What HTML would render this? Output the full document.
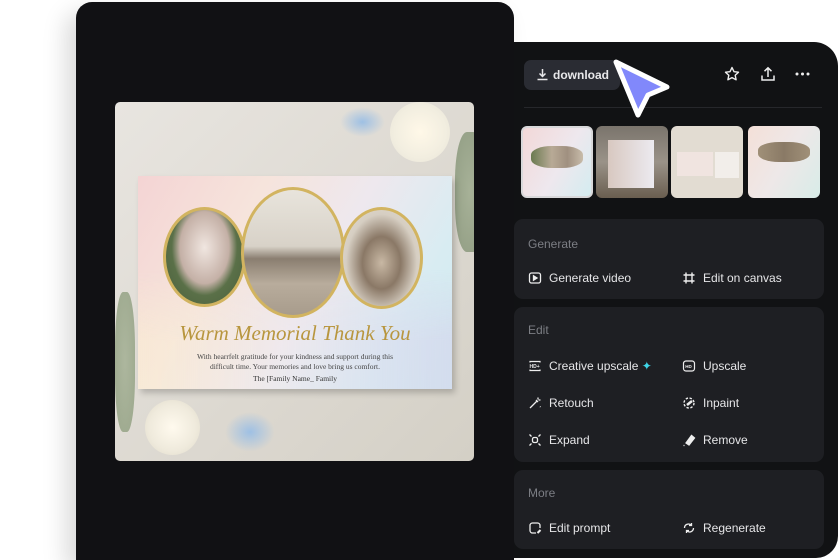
<!DOCTYPE html>
<html style="width:840px;height:560px;overflow:hidden"><head><meta charset="utf-8"><style>
*{margin:0;padding:0;box-sizing:border-box}
body{width:840px;height:560px;background:#fff;position:relative;overflow:hidden;font-family:"Liberation Sans",sans-serif}
.left{position:absolute;left:76px;top:2px;width:438px;height:558px;background:#111114;border-radius:16px 16px 0 0;box-shadow:-10px 10px 24px rgba(0,0,0,.15)}
.img{position:absolute;left:115px;top:102px;width:359px;height:359px;border-radius:5px;overflow:hidden;background:linear-gradient(135deg,#e8e5e0,#dcd8d0 60%,#d4d0c6)}
.card{position:absolute;left:23px;top:74px;width:314px;height:213px;background:linear-gradient(120deg,#f4d4d4 0%,#f6e4dc 30%,#eee8ee 55%,#d8ecf2 80%,#cfeef0 100%);box-shadow:3px 4px 6px rgba(0,0,0,.2);overflow:hidden}
.card:after{content:"";position:absolute;left:0;right:0;bottom:0;height:120px;background:linear-gradient(90deg,rgba(250,240,210,.5),rgba(240,235,240,.2),rgba(215,200,235,.45));-webkit-mask:linear-gradient(transparent,#000 60%)}
.ov{position:absolute;border-radius:50%;border:3px solid #d2b460;z-index:2}
.t{position:absolute;z-index:3;width:100%;text-align:center;left:0}
.right{position:absolute;left:514px;top:42px;width:324px;height:516px;background:#111214;border-radius:0 24px 22px 0}
.dl{position:absolute;left:10px;top:18px;width:96px;height:30px;background:#2a2c33;border-radius:7px;color:#e8e8ea;font-weight:bold;font-size:12px;line-height:30px;padding-left:29px}
.sep{position:absolute;left:10px;right:16px;top:65px;height:1px;background:#26272b}
.th{position:absolute;top:84px;width:72px;height:72px;border-radius:6px;overflow:hidden}
.box{position:absolute;left:0px;width:310px;background:#1e1f23;border-radius:9px}
.h{position:absolute;left:14px;color:#7c7e84;font-size:12px}
.it{position:absolute;color:#e6e6e8;font-size:12px;padding-left:21px}
.it svg{position:absolute;left:0;top:0}
</style></head><body>
<div class="left"></div>
<div class="img">
 <div style="position:absolute;left:275px;top:0;width:60px;height:60px;border-radius:50%;background:radial-gradient(#fff8e8,#f2eee0 60%,#e6e2d6)"></div>
 <div style="position:absolute;left:340px;top:30px;width:30px;height:120px;background:radial-gradient(#9aa88a,#7e8e70);border-radius:40%;opacity:.8"></div>
 <div style="position:absolute;left:225px;top:5px;width:45px;height:30px;background:radial-gradient(#9ec0e4,transparent 70%)"></div>
 <div style="position:absolute;left:0px;top:190px;width:20px;height:140px;background:radial-gradient(#a0ad90,#8a9a7a);border-radius:40%;opacity:.8"></div>
 <div style="position:absolute;left:30px;top:298px;width:55px;height:55px;border-radius:50%;background:radial-gradient(#fffaee,#efeadc 60%,#ddd8c8)"></div>
 <div style="position:absolute;left:110px;top:310px;width:50px;height:40px;background:radial-gradient(#9ec0e4,transparent 70%)"></div>
 <div class="card">
  <div class="ov" style="left:25px;top:31px;width:83px;height:100px;background:radial-gradient(ellipse at 50% 40%,#f0e6e0 0,#d8c8c0 25%,#c4b0a6 45%,#5a7048 60%,#4a5e3c 100%)"></div>
  <div class="ov" style="left:103px;top:11px;width:104px;height:131px;background:linear-gradient(#e8e4dc 0,#d8d2c8 45%,#8a7e70 55%,#b8ac9c 75%,#a89c8c)"></div>
  <div class="ov" style="left:202px;top:31px;width:83px;height:102px;background:radial-gradient(ellipse at 50% 55%,#c8b8a4 0,#8a7866 35%,#d6cec2 65%,#e4ded4)"></div>
  <div class="t" style="top:145px;font-family:'Liberation Serif',serif;font-style:italic;font-size:21px;color:#b8963e">Warm Memorial Thank You</div>
  <div class="t" style="top:176px;font-family:'Liberation Serif',serif;font-size:7.5px;color:#444;line-height:10px">With hearrfelt gratitude for your kindness and support during this<br>difficult time. Your memories and love bring us comfort.</div>
  <div class="t" style="top:198px;font-family:'Liberation Serif',serif;font-size:7.5px;color:#333">The [Family Name_ Family</div>
 </div>
</div>
<div class="right">
 <div class="dl"><svg style="position:absolute;left:12px;top:8px" width="13" height="13" viewBox="0 0 13 13" fill="none" stroke="#e8e8ea" stroke-width="1.5"><path d="M6.5 1v7M3.5 5.5l3 3 3-3M1.5 11.5h10"/></svg>download</div>
 <svg style="position:absolute;left:210px;top:24px" width="16" height="16" viewBox="0 0 16 16" fill="none" stroke="#eee" stroke-width="1.4" stroke-linejoin="round"><path d="M8 1.5l2 4.2 4.5.5-3.3 3.1.9 4.5L8 11.6l-4.1 2.2.9-4.5L1.5 6.2 6 5.7z"/></svg>
 <svg style="position:absolute;left:246px;top:24px" width="16" height="16" viewBox="0 0 16 16" fill="none" stroke="#eee" stroke-width="1.5"><path d="M8 11V2M4.5 5.2L8 1.8l3.5 3.4M2 9.5v4.5h12V9.5"/></svg>
 <svg style="position:absolute;left:281px;top:30px" width="16" height="4"><circle cx="2" cy="2" r="1.5" fill="#eee"/><circle cx="7.5" cy="2" r="1.5" fill="#eee"/><circle cx="13" cy="2" r="1.5" fill="#eee"/></svg>
 <div class="sep"></div>
 <div class="th" style="left:7px;border:2px solid #d8d8da;background:linear-gradient(120deg,#f2d8d8,#eee8ee 55%,#d4ecf0)"><div style="position:absolute;left:8px;top:18px;width:52px;height:22px;background:linear-gradient(90deg,#6a7a50,#b8aa96 40%,#a09080 70%,#c8bcaa);border-radius:40%"></div></div>
 <div class="th" style="left:82px;background:linear-gradient(#7a746c,#9a9288 50%,#6a5e50)"><div style="position:absolute;left:12px;top:14px;width:46px;height:48px;background:linear-gradient(90deg,#d8c8c0,#eceaf0)"></div></div>
 <div class="th" style="left:157px;background:#e2dcd2"><div style="position:absolute;left:6px;top:26px;width:36px;height:24px;background:#f0e4e0"></div><div style="position:absolute;left:44px;top:26px;width:24px;height:26px;background:#f2eeea"></div></div>
 <div class="th" style="left:234px;background:linear-gradient(120deg,#f4e0d8,#eee8e8 50%,#d8ece8)"><div style="position:absolute;left:10px;top:16px;width:52px;height:20px;background:linear-gradient(90deg,#a09078,#8a7a66,#a09078);border-radius:40%"></div></div>
 <div class="box" style="top:177px;height:80px">
  <div class="h" style="top:18px">Generate</div>
  <div class="it" style="left:14px;top:52px"><svg width="14" height="14" viewBox="0 0 14 14" fill="none" stroke="#eee" stroke-width="1.3"><rect x="1.5" y="2" width="11" height="10" rx="2"/><path d="M5.5 4.8v4.4L9 7z" fill="#eee"/></svg>Generate video</div>
  <div class="it" style="left:168px;top:52px"><svg width="14" height="14" viewBox="0 0 14 14" fill="none" stroke="#eee" stroke-width="1.4"><path d="M4 1.5v11M10 1.5v11M1.5 4h11M1.5 10h11"/></svg>Edit on canvas</div>
 </div>
 <div class="box" style="top:265px;height:155px">
  <div class="h" style="top:16px">Edit</div>
  <div class="it" style="left:14px;top:52px"><svg width="14" height="14" viewBox="0 0 14 14" fill="none" stroke="#eee" stroke-width="1.2"><path d="M2 3.5V2.5h10v1M2 10.5v1h10v-1"/><text x="1.5" y="9" font-size="5" fill="#eee" stroke="none" font-weight="bold">HD+</text></svg>Creative upscale <span style="color:#3fd6e8">✦</span></div>
  <div class="it" style="left:168px;top:52px"><svg width="14" height="14" viewBox="0 0 14 14" fill="none" stroke="#eee" stroke-width="1.2"><rect x="1.5" y="2" width="11" height="10" rx="2.5"/><text x="3.3" y="8.8" font-size="4.5" fill="#eee" stroke="none" font-weight="bold">HD</text></svg>Upscale</div>
  <div class="it" style="left:14px;top:89px"><svg width="14" height="14" viewBox="0 0 14 14" fill="none" stroke="#eee" stroke-width="1.3"><path d="M2 12l7-7M8 4l2 2M10 1.5v2M12.5 4h-2M12 10.5l.5.5"/></svg>Retouch</div>
  <div class="it" style="left:168px;top:89px"><svg width="14" height="14" viewBox="0 0 14 14" fill="none" stroke="#eee" stroke-width="1.4"><circle cx="7" cy="7" r="5" stroke-dasharray="2.4 1.6"/><path d="M5 9l5-4" stroke-width="2.5"/></svg>Inpaint</div>
  <div class="it" style="left:14px;top:126px"><svg width="14" height="14" viewBox="0 0 14 14" fill="none" stroke="#eee" stroke-width="1.3"><rect x="4.5" y="4.5" width="5" height="5" rx="1.5"/><path d="M1.5 1.5l2 2M12.5 1.5l-2 2M1.5 12.5l2-2M12.5 12.5l-2-2"/></svg>Expand</div>
  <div class="it" style="left:168px;top:126px"><svg width="14" height="14" viewBox="0 0 14 14" fill="none" stroke="#eee" stroke-width="1.3"><path d="M4 10l5.5-7.5 3 2.5L7 12z" fill="#eee"/><path d="M1.5 12.5h1"/></svg>Remove</div>
 </div>
 <div class="box" style="top:428px;height:79px">
  <div class="h" style="top:16px">More</div>
  <div class="it" style="left:14px;top:51px"><svg width="14" height="14" viewBox="0 0 14 14" fill="none" stroke="#eee" stroke-width="1.3"><path d="M12 7V4.5a2.5 2.5 0 0 0-2.5-2.5h-5A2.5 2.5 0 0 0 2 4.5v5A2.5 2.5 0 0 0 4.5 12H8"/><path d="M9.5 12l3-3" stroke-width="2"/></svg>Edit prompt</div>
  <div class="it" style="left:168px;top:51px"><svg width="14" height="14" viewBox="0 0 14 14" fill="none" stroke="#eee" stroke-width="1.3"><path d="M2.5 7a4 4 0 0 1 7-2.6M11.5 7a4 4 0 0 1-7 2.6M9.5 2v2.5H7M4.5 12V9.5H7"/></svg>Regenerate</div>
 </div>
</div>
<svg style="position:absolute;left:606px;top:53px" width="72" height="72" viewBox="606 53 72 72"><path d="M616 62L667 87 L648 95 L638 115Z" fill="#8188fb" stroke="#fff" stroke-width="5" stroke-linejoin="round"/></svg>
</body></html>
